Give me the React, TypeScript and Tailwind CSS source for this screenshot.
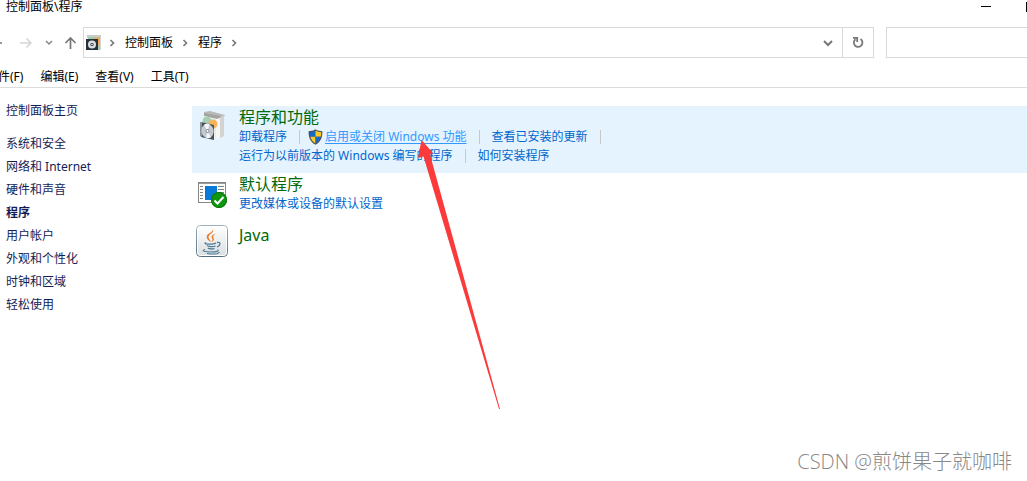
import React from "react";

const sideLinks = [
  "系统和安全",
  "网络和 Internet",
  "硬件和声音",
  "程序",
  "用户帐户",
  "外观和个性化",
  "时钟和区域",
  "轻松使用",
];

const Chevron = () => (
  <svg width="7" height="8" viewBox="0 0 7 8" fill="none" stroke="#777" strokeWidth="1.6">
    <path d="M1.5 1 4.5 4l-3 3" />
  </svg>
);

const ProgramsIcon = () => (
  <svg width="32" height="36" viewBox="0 0 32 36">
    <path d="M8 5l6-1 15 4-2 3-19-3z" fill="#b9b9b7" />
    <path d="M8 6l16 3v4L8 9z" fill="#a3a3a1" />
    <path d="M8 9l13 3v18L8 26z" fill="#e9ebe8" />
    <path d="M20 12l4-1v20l-4 1z" fill="#f6f6f5" />
    <path d="M24 11l4-3v21l-4 2z" fill="#d3d3d2" />
    <circle cx="11" cy="14" r="4.500" fill="#a8cdb4" />
    <circle cx="17" cy="17" r="4.500" fill="#f6b45c" />
    <path d="M5 15l13 3v15L5 30z" fill="#49525a" />
    <path d="M4 15h2v15l-2-1z" fill="#8b959b" />
    <ellipse cx="11.500" cy="24" rx="6.200" ry="7" fill="#c3cbcf" transform="rotate(-12 11.500 24)" />
    <path d="M11.500 24 8 17.700q3-2 5.500-.5zM11.500 24 15 30.500q-3 1.500-5 .3z" fill="#f4f7f8" />
    <circle cx="11.500" cy="24" r="2" fill="#858e93" />
    <circle cx="11.500" cy="24" r="1.100" fill="#fff" />
  </svg>
);

const DefaultsIcon = () => (
  <svg width="32" height="36" viewBox="0 0 32 36">
    <rect x="2.500" y="8.500" width="27" height="20" fill="#fff" stroke="#858585" />
    <path d="M3 9.500h26" stroke="#9b9b9b" />
    <path d="M4 12.500h3M4 15.500h3M4 18.500h3M4 21.500h3M4 24.500h3M22 12.500h6M22 15.500h6M22 18.500h6" stroke="#808080" />
    <rect x="9" y="12" width="12" height="14" fill="#0a78d7" />
    <circle cx="23" cy="26" r="8" fill="#11960f" />
    <circle cx="23" cy="26" r="7.500" fill="none" stroke="#08730a" />
    <path d="M18.500 26.500l3 3 6-6.500" fill="none" stroke="#fff" strokeWidth="2" />
  </svg>
);

const JavaIcon = () => (
  <svg width="32" height="36" viewBox="0 0 32 36" fill="none">
    <defs>
      <linearGradient id="tile" x1="0" y1="0" x2="0" y2="1">
        <stop offset="0" stopColor="#fff" />
        <stop offset="1" stopColor="#d9dee1" />
      </linearGradient>
      <linearGradient id="edge" x1="0" y1="0" x2="0" y2="1">
        <stop offset="0" stopColor="#9db0bd" />
        <stop offset="1" stopColor="#536d7d" />
      </linearGradient>
    </defs>
    <rect x=".5" y=".5" width="31" height="31" rx="4" fill="url(#tile)" stroke="url(#edge)" />
    <rect x="1.500" y="1.500" width="29" height="29" rx="3" stroke="#fff" />
    <path d="M17 4.500c1.500 3.500-4.500 4.500-4.500 7.500 0 2 1.500 2.500 2.500 5-3.500-2-5-4-4-6.500 1-2.200 5.500-3 6-6z" fill="#ee7623" />
    <path d="M20 8.500c-4 1.500-5 2.500-4 4.500.8 1.500.4 2.700-.7 4 3-1.500 3-3 2-4.500-.8-1.400.5-2.500 2.700-4z" fill="#ee7623" />
    <path d="M10 17.500c-3 1.500 2 1.800 5 1.600 2.500 0 4-.5 5-1M11 20.500c1 1.500 7 1.500 8.500.5M12 23c1 1.200 5 1.200 6.500.5M21 17.500c4-1 4 2.500 0 4.500" stroke="#4d7993" strokeWidth="1.300" />
    <path d="M9 24.500c-5 1.500 1 2.500 6 2.500 5 0 9-1 6.500-2.200M11 28.500c5 .8 11 .5 12.500-1.500" stroke="#4d7993" strokeWidth="1.100" />
  </svg>
);

const Shield = () => (
  <svg width="15" height="16" viewBox="0 0 15 16">
    <path d="M7.500.3C5.500 1.700 3 2.200.6 2.300.4 8.800 2.600 13.200 7.500 15.700c4.900-2.500 7.100-6.900 6.900-13.400C12 2.200 9.500 1.700 7.500.3z" fill="#4a4f55" />
    <path d="M7.500 1.600C5.600 2.700 3.700 3.100 1.700 3.300c0 1.700.2 3.200.6 4.500h5.200z" fill="#1569c7" />
    <path d="M7.500 1.600c1.900 1.100 3.800 1.500 5.800 1.700 0 1.700-.2 3.200-.6 4.500H7.500z" fill="#ffc928" />
    <path d="M2.300 7.800c.9 3 2.600 5.200 5.200 6.700V7.800z" fill="#ffc928" />
    <path d="M12.700 7.800c-.9 3-2.600 5.200-5.200 6.700V7.800z" fill="#1569c7" />
  </svg>
);

const PathIcon = () => (
  <svg width="16" height="17" viewBox="0 0 16 17">
    <path d="M1 1h14v3H1z" fill="#c9cccc" />
    <path d="M2 3h12v13H2z" fill="#9fcdb0" />
    <path d="M8 4l6-1v9l-3-1z" fill="#f3a952" />
    <path d="M14 3h1v13h-1z" fill="#d5d5d5" />
    <rect x="0" y="5" width="12" height="11" fill="#273038" />
    <circle cx="6" cy="10.500" r="4" fill="#dce1e3" />
    <circle cx="6" cy="10.500" r="1.700" fill="#39434a" />
    <circle cx="6" cy="10.500" r=".8" fill="#fff" />
  </svg>
);

const Divider = () => <span className="mx-3 h-[14px] w-px bg-[#c9c9c9]" />;

type ItemProps = {
  icon: React.ReactNode;
  title: string;
  active?: boolean;
  children?: React.ReactNode;
};

const Item = ({ icon, title, active, children }: ItemProps) => (
  <section className={`flex min-h-[51px] items-start pl-1 ${active ? "bg-[#e5f3ff] pb-2" : ""}`}>
    <div className="mt-px w-[43px] shrink-0">{icon}</div>
    <div className="pt-[2px]">
      <h2 className="text-base leading-[19px]">
        <a href="#" className="text-[#00690a]">{title}</a>
      </h2>
      <div className="leading-[19px] text-[#0066cc]">{children}</div>
    </div>
  </section>
);

const App = () => {
  return (
    <div className="relative min-h-screen overflow-hidden bg-white font-['Noto_Sans','Noto_Sans_CJK_SC',sans-serif] text-xs whitespace-nowrap text-black">
      <header className="flex h-[27px] items-start justify-between pl-[6px]">
        <h1 className="leading-[14px]">控制面板\程序</h1>
        <div className="-mr-[27px] flex">
          <button aria-label="最小化" className="flex h-[13px] w-[45px] items-center justify-center">
            <span className="h-px w-[10px] bg-black" />
          </button>
          <button aria-label="最大化" className="flex h-[13px] w-[46px] items-center justify-center">
            <span className="h-[10px] w-[10px] border border-black" />
          </button>
        </div>
      </header>

      {/* navigation bar */}
      <div className="flex h-[31px]">
        <div className="flex w-[83px] shrink-0 items-center">
          <button aria-label="后退" className="-ml-[10px] w-[13px]">
            <svg width="13" height="12" viewBox="0 0 13 12" fill="none" stroke="#777" strokeWidth="1.500"><path d="M12 6H1M6 1 1 6l5 5" /></svg>
          </button>
          <button aria-label="前进" className="ml-4">
            <svg width="14" height="12" viewBox="0 0 14 12" fill="none" stroke="#d5d5d5" strokeWidth="1.500"><path d="M1 6h11M7.500 1.500 12 6l-4.500 4.500" /></svg>
          </button>
          <button aria-label="最近浏览的位置" className="ml-3">
            <svg width="8" height="6" viewBox="0 0 8 6" fill="none" stroke="#888" strokeWidth="1.500"><path d="M1 1l3 3 3-3" /></svg>
          </button>
          <button aria-label="向上" className="ml-[11px]">
            <svg width="13" height="14" viewBox="0 0 13 14" fill="none" stroke="#777" strokeWidth="1.700"><path d="M6.500 13V2M1.500 7l5-5 5 5" /></svg>
          </button>
        </div>
        <div className="flex flex-1 border border-[#d9d9d9]">
          <nav aria-label="地址" className="flex flex-1 items-center pl-[2px]">
            <PathIcon />
            <span className="ml-[7px]"><Chevron /></span>
            <a href="#" className="ml-[9px] leading-5">控制面板</a>
            <span className="mx-[9px]"><Chevron /></span>
            <a href="#" className="leading-5">程序</a>
            <span className="ml-[9px]"><Chevron /></span>
          </nav>
          <button aria-label="以前的位置" className="flex w-[28px] items-center justify-center">
            <svg width="10" height="8" viewBox="0 0 10 8" fill="none" stroke="#777" strokeWidth="2"><path d="M1 2l4 4 4-4" /></svg>
          </button>
          <button aria-label="刷新" className="flex w-[31px] items-center justify-center border-l border-[#d9d9d9]">
            <svg width="12" height="13" viewBox="0 0 12 13" fill="none" stroke="#777" strokeWidth="1.800"><path d="M8.500 3A4.300 4.300 0 1 1 3.500 3.200M1 1.800h4.200V6" /></svg>
          </button>
        </div>
        <input type="search" aria-label="搜索" className="-mr-1 ml-3 w-[145px] shrink-0 border border-[#d9d9d9] px-2 outline-none" />
      </div>

      <div className="flex h-[30px] items-end gap-[17px] border-b border-[#dcdcdc] pb-[1px]">
        <button className="-ml-[14px] leading-[19px]">文件(F)</button>
        <button className="leading-[19px]">编辑(E)</button>
        <button className="leading-[19px]">查看(V)</button>
        <button className="leading-[19px]">工具(T)</button>
      </div>

      <div className="flex">
        <aside className="flex w-[192px] shrink-0 flex-col items-start pt-[11px] pl-[6px] leading-[23px] text-[#151c55]">
          <a href="#" className="mb-[10px]">控制面板主页</a>
          {sideLinks.map((name) => (
            <a href="#" key={name} className={name === "程序" ? "font-bold" : ""}>{name}</a>
          ))}
        </aside>

        <main className="flex-1 pt-[18px]">
          <Item icon={<ProgramsIcon />} title="程序和功能" active>
            <div className="flex items-center">
              <a href="#">卸载程序</a>
              <Divider />
              <span className="-ml-1 mr-[2px]"><Shield /></span>
              <a href="#" className="text-[#3399ff] underline underline-offset-2">启用或关闭 Windows 功能</a>
              <Divider />
              <a href="#">查看已安装的更新</a>
              <Divider />
            </div>
            <div className="flex items-center">
              <a href="#">运行为以前版本的 Windows 编写的程序</a>
              <Divider />
              <a href="#">如何安装程序</a>
            </div>
          </Item>
          <Item icon={<DefaultsIcon />} title="默认程序">
            <a href="#">更改媒体或设备的默认设置</a>
          </Item>
          <Item icon={<JavaIcon />} title="Java" />
        </main>
      </div>

      {/* red arrow lying over the links */}
      <svg className="pointer-events-none absolute top-[140px] left-[418px]" width="83" height="270" viewBox="0 0 83 270">
        <path d="M3.500 0 15 13l-3 1.500L82 269h-1L5.500 16.500 0 18z" fill="#fb3b3b" />
      </svg>

      <p className="absolute right-[15px] bottom-1 font-['Open_Sans','Noto_Sans_CJK_SC',sans-serif] text-xl leading-[30px] font-light text-[#888]">CSDN @煎饼果子就咖啡</p>
    </div>
  );
};

export default App;
